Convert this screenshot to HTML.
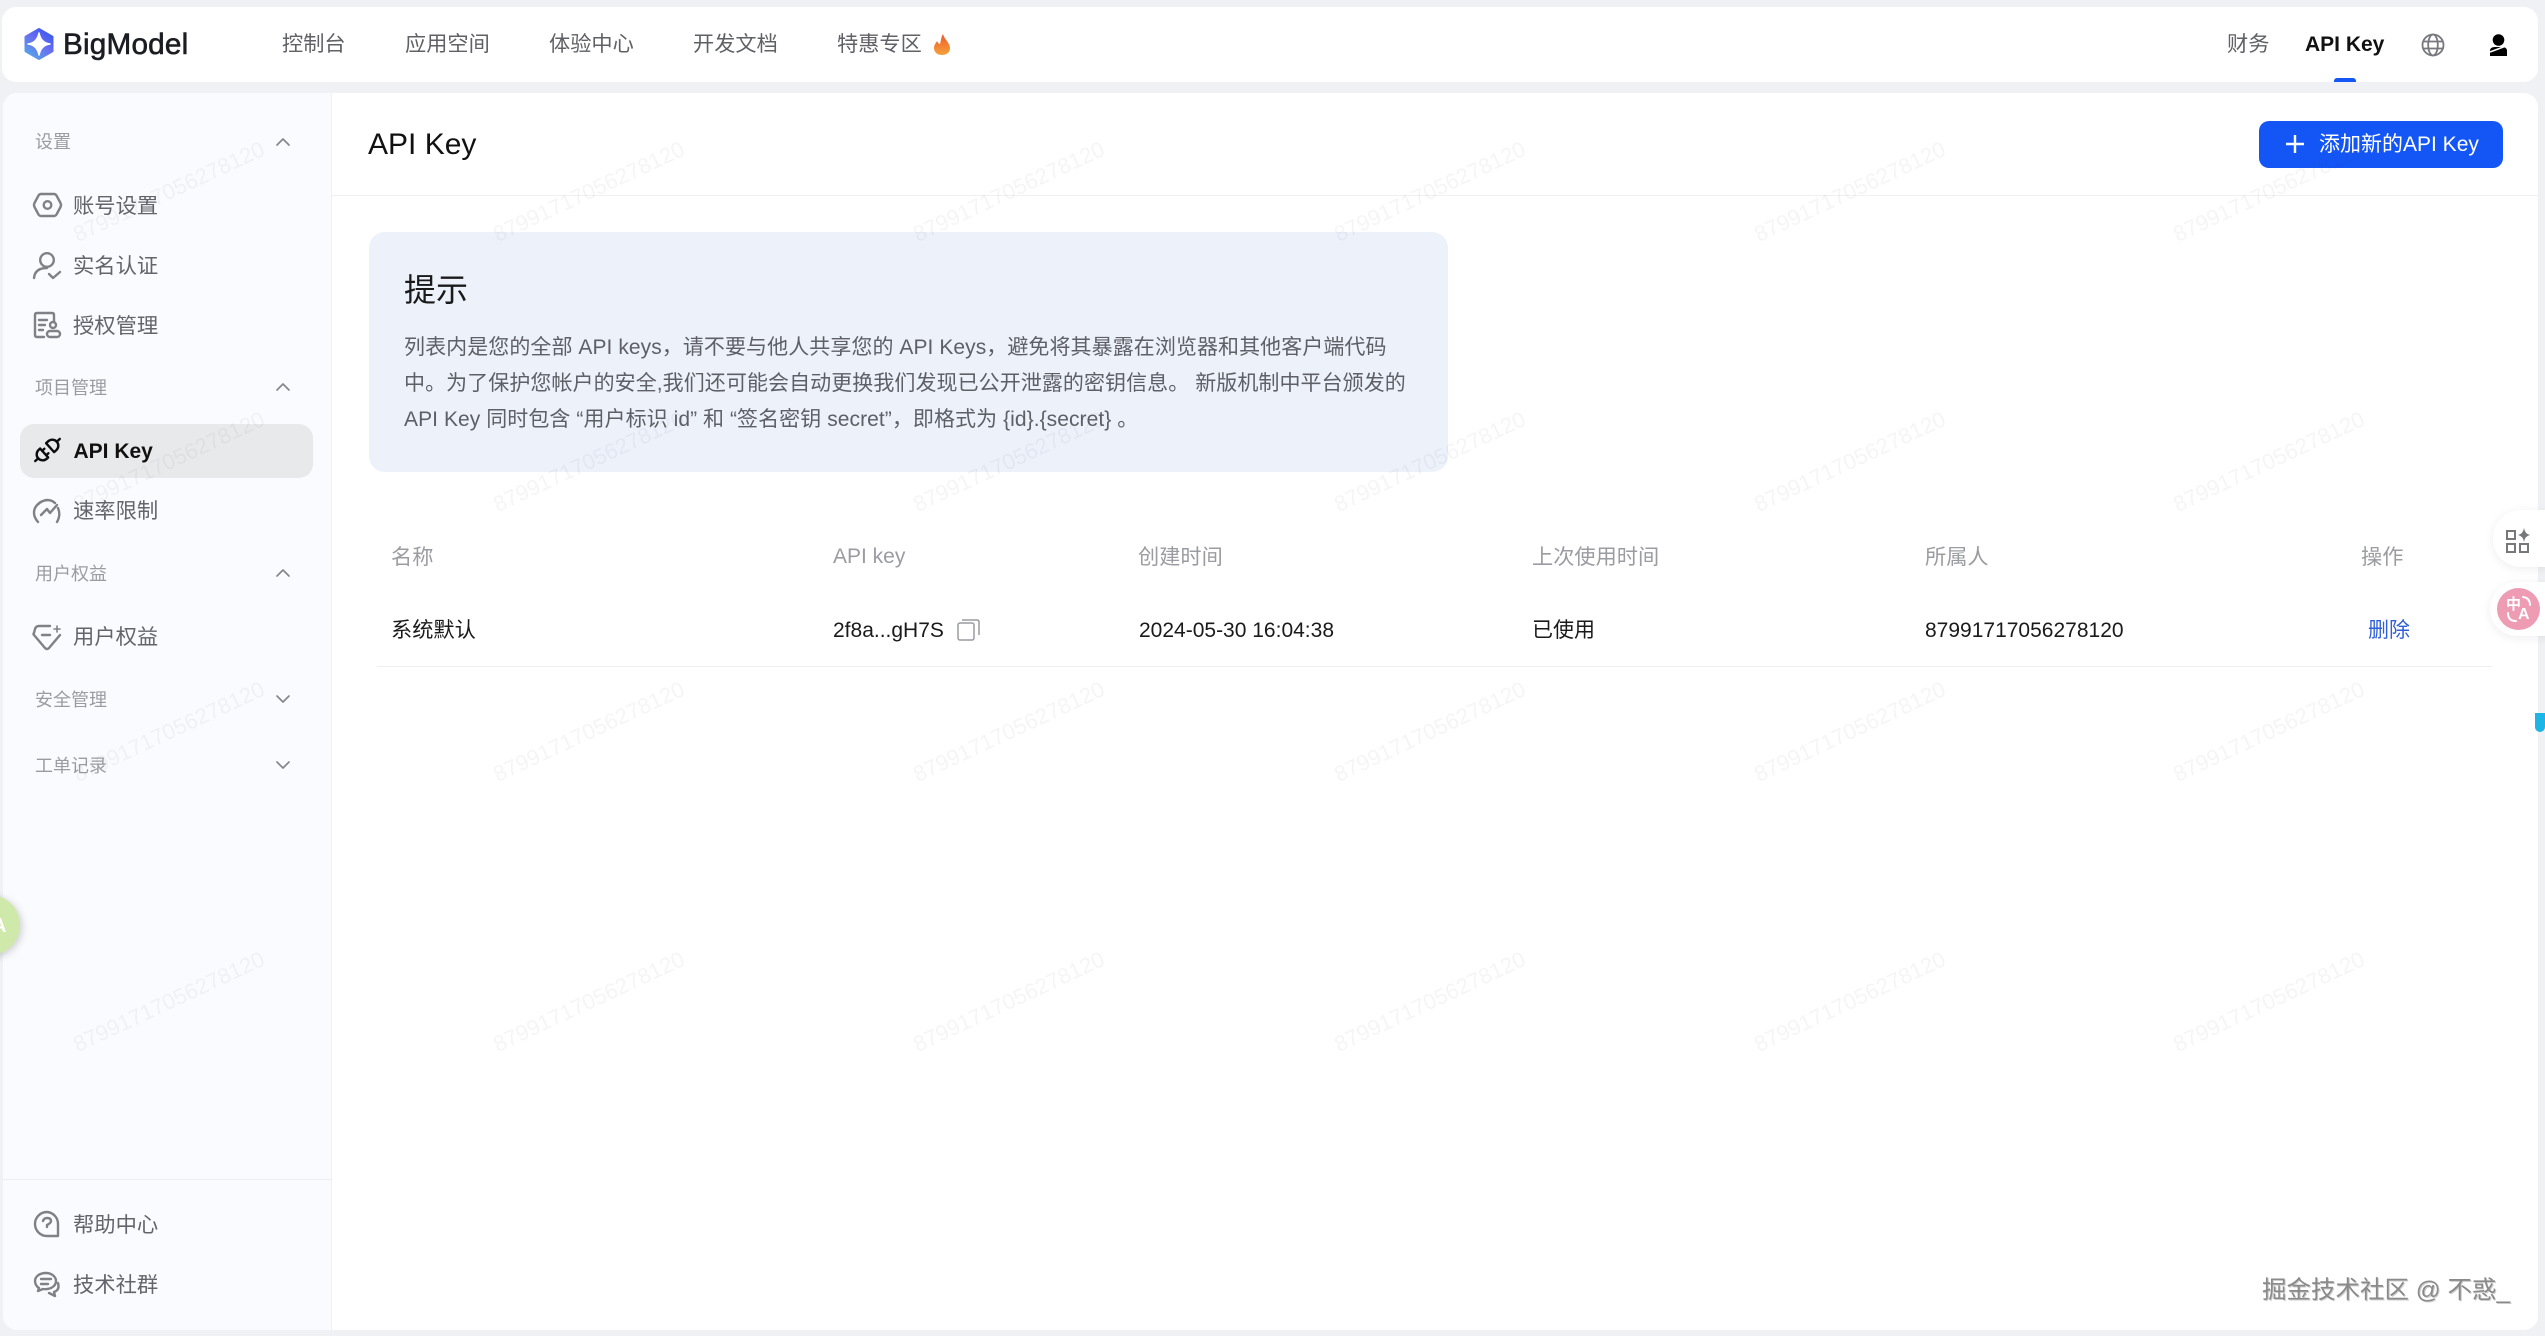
<!DOCTYPE html>
<html lang="zh-CN">
<head>
<meta charset="utf-8">
<title>API Key - BigModel</title>
<style>
html,body{margin:0;padding:0;width:2545px;height:1336px;overflow:hidden;background:#eff1f4;}
body{position:relative;font-family:"Liberation Sans","Noto Sans CJK SC",sans-serif;font-size:21px;color:#666;}
.box{position:absolute;box-sizing:border-box;}
.t{position:absolute;white-space:nowrap;line-height:36px;height:36px;}
.nav{color:#5f6166;font-size:21.2px;}
.sec{font-size:18px;color:#9b9ca1;}
.item{color:#63656b;font-size:21.3px;}
.th{color:#9b9ca1;font-size:21.2px;}
.td{color:#1a1a1a;}
.p{color:#5d6066;letter-spacing:.065px;}
.wm{position:absolute;width:260px;height:30px;line-height:30px;text-align:center;font-size:22px;color:rgba(60,60,70,.05);transform:rotate(-25deg);white-space:nowrap;}
</style>
</head>
<body>
<!-- header -->
<div class="box" style="left:2px;top:7px;width:2536px;height:75px;background:#fff;border-radius:14px;"></div>
<div class="t" style="left:63px;top:27px;font-size:29.7px;font-weight:500;color:#1b1d22;letter-spacing:.2px;-webkit-text-stroke:.6px #1b1d22;">BigModel</div>
<div class="t nav" style="left:282px;top:27px;">控制台</div>
<div class="t nav" style="left:405px;top:27px;">应用空间</div>
<div class="t nav" style="left:549px;top:27px;">体验中心</div>
<div class="t nav" style="left:693px;top:27px;">开发文档</div>
<div class="t nav" style="left:837px;top:27px;">特惠专区</div>
<div class="t nav" style="left:2227px;top:27px;">财务</div>
<div class="t" style="left:2305px;top:27px;font-weight:bold;color:#111;">API Key</div>
<div class="box" style="left:2334px;top:78px;width:22px;height:4px;background:#1456f5;border-radius:3px 3px 0 0;"></div>

<!-- main panel -->
<div class="box" style="left:3px;top:93px;width:2535px;height:1237px;background:#fff;border-radius:14px;overflow:hidden;">
  <div class="box" style="left:0;top:0;width:329px;height:1237px;background:#fafbfe;border-right:1px solid #eef0f3;"></div>
  <div class="box" style="left:0;top:1086px;width:329px;height:1px;background:#eceef1;"></div>
  <div class="box" style="left:329px;top:102px;width:2206px;height:1px;background:#eff0f2;"></div>
</div>

<!-- sidebar -->
<div class="box" style="left:20px;top:424px;width:293px;height:54px;background:#e8e9eb;border-radius:14px;"></div>
<div class="t sec" style="left:35px;top:124px;">设置</div>
<div class="t item" style="left:73px;top:187.500px;">账号设置</div>
<div class="t item" style="left:73px;top:247.500px;">实名认证</div>
<div class="t item" style="left:73px;top:307.500px;">授权管理</div>
<div class="t sec" style="left:35px;top:370px;">项目管理</div>
<div class="t" style="left:73.500px;top:434px;font-weight:bold;color:#111;">API Key</div>
<div class="t item" style="left:73px;top:493px;">速率限制</div>
<div class="t sec" style="left:35px;top:556px;">用户权益</div>
<div class="t item" style="left:73px;top:619px;">用户权益</div>
<div class="t sec" style="left:35px;top:682px;">安全管理</div>
<div class="t sec" style="left:35px;top:748px;">工单记录</div>
<div class="t item" style="left:73px;top:1207px;">帮助中心</div>
<div class="t item" style="left:73px;top:1267px;">技术社群</div>

<!-- title + button -->
<div class="t" style="left:368px;top:127px;font-size:30px;color:#111;">API Key</div>
<div class="box" style="left:2259px;top:121px;width:244px;height:47px;background:#1456f5;border-radius:10px;"></div>
<div class="t" style="left:2319px;top:127px;color:#fff;">添加新的API Key</div>

<!-- hint -->
<div class="box" style="left:369px;top:232px;width:1079px;height:240px;background:#edf1fa;border-radius:16px;"></div>
<div class="t" style="left:404px;top:272px;font-size:32px;color:#1a1a1a;">提示</div>
<div class="t p" style="left:404px;top:330px;">列表内是您的全部 API keys，请不要与他人共享您的 API Keys，避免将其暴露在浏览器和其他客户端代码</div>
<div class="t p" style="left:404px;top:366px;">中。为了保护您帐户的安全,我们还可能会自动更换我们发现已公开泄露的密钥信息。 新版机制中平台颁发的</div>
<div class="t p" style="left:404px;top:402px;">API Key 同时包含 “用户标识 id” 和 “签名密钥 secret”，即格式为 {id}.{secret} 。</div>

<!-- table -->
<div class="t th" style="left:391px;top:540px;">名称</div>
<div class="t th" style="left:833px;top:539px;font-size:21px;">API key</div>
<div class="t th" style="left:1138px;top:540px;">创建时间</div>
<div class="t th" style="left:1532px;top:540px;">上次使用时间</div>
<div class="t th" style="left:1925px;top:540px;">所属人</div>
<div class="t th" style="left:2361px;top:540px;">操作</div>
<div class="t td" style="left:391px;top:613px;font-size:21.200px;">系统默认</div>
<div class="t td" style="left:833px;top:612.500px;">2f8a...gH7S</div>
<div class="t td" style="left:1139px;top:612.500px;">2024-05-30 16:04:38</div>
<div class="t td" style="left:1532px;top:613px;">已使用</div>
<div class="t td" style="left:1925px;top:612.500px;">87991717056278120</div>
<div class="t" style="left:2368px;top:612.500px;color:#2f5fd8;">删除</div>
<div class="box" style="left:377px;top:666px;width:2115px;height:1px;background:#eceef1;"></div>

<!-- watermarks -->
<div class="wm" style="left:39px;top:177px;">87991717056278120</div>
<div class="wm" style="left:459px;top:177px;">87991717056278120</div>
<div class="wm" style="left:879px;top:177px;">87991717056278120</div>
<div class="wm" style="left:1300px;top:177px;">87991717056278120</div>
<div class="wm" style="left:1720px;top:177px;">87991717056278120</div>
<div class="wm" style="left:2139px;top:177px;">87991717056278120</div>
<div class="wm" style="left:39px;top:447px;">87991717056278120</div>
<div class="wm" style="left:459px;top:447px;">87991717056278120</div>
<div class="wm" style="left:879px;top:447px;">87991717056278120</div>
<div class="wm" style="left:1300px;top:447px;">87991717056278120</div>
<div class="wm" style="left:1720px;top:447px;">87991717056278120</div>
<div class="wm" style="left:2139px;top:447px;">87991717056278120</div>
<div class="wm" style="left:39px;top:717px;">87991717056278120</div>
<div class="wm" style="left:459px;top:717px;">87991717056278120</div>
<div class="wm" style="left:879px;top:717px;">87991717056278120</div>
<div class="wm" style="left:1300px;top:717px;">87991717056278120</div>
<div class="wm" style="left:1720px;top:717px;">87991717056278120</div>
<div class="wm" style="left:2139px;top:717px;">87991717056278120</div>
<div class="wm" style="left:39px;top:987px;">87991717056278120</div>
<div class="wm" style="left:459px;top:987px;">87991717056278120</div>
<div class="wm" style="left:879px;top:987px;">87991717056278120</div>
<div class="wm" style="left:1300px;top:987px;">87991717056278120</div>
<div class="wm" style="left:1720px;top:987px;">87991717056278120</div>
<div class="wm" style="left:2139px;top:987px;">87991717056278120</div>

<!-- floating widgets -->
<div class="box" style="left:-40px;top:895px;width:60px;height:60px;border-radius:50%;background:#cfe9ab;box-shadow:2px 2px 8px rgba(0,0,0,.18);"></div>
<div class="t" style="left:-8px;top:914px;font-size:20px;font-weight:bold;color:#fff;line-height:24px;height:24px;">A</div>
<div class="box" style="left:2493px;top:510px;width:80px;height:57px;border-radius:28px;background:#fff;box-shadow:0 2px 10px rgba(0,0,0,.07);"></div>
<div class="box" style="left:2490px;top:582px;width:80px;height:54px;border-radius:27px;background:#fff;box-shadow:0 2px 10px rgba(0,0,0,.07);"></div>
<div class="box" style="left:2497px;top:588px;width:43px;height:42px;border-radius:50%;background:#ee9cb4;"></div>
<div class="t" style="left:2506px;top:595px;font-size:15px;font-weight:bold;color:#fff;line-height:20px;height:20px;">中</div>
<div class="t" style="left:2518px;top:605px;font-size:16px;font-weight:bold;color:#fff;line-height:20px;height:20px;">A</div>
<div class="box" style="left:2535px;top:713px;width:10px;height:19px;background:#1db4e6;border-radius:0 0 5px 5px;"></div>

<!-- juejin mark -->
<div class="t" style="left:2262px;top:1272.500px;font-size:24.5px;color:#8a8a8a;text-shadow:1px 1px 0 #ccc,-1px -1px 0 #fff;">掘金技术社区 @ 不惑_</div>

<!-- icons -->
<svg width="2545" height="1336" viewBox="0 0 2545 1336" style="position:absolute;left:0;top:0;" fill="none">
  <defs>
    <linearGradient id="lg" x1="50" y1="28" x2="26" y2="60" gradientUnits="userSpaceOnUse">
      <stop offset="0" stop-color="#2f55ee"/><stop offset=".45" stop-color="#6a6df0"/><stop offset="1" stop-color="#4fb2e8"/>
    </linearGradient>
    <linearGradient id="fl" x1="0" y1="0" x2="0" y2="1">
      <stop offset="0" stop-color="#f0562a"/><stop offset="1" stop-color="#f5a33a"/>
    </linearGradient>
  </defs>
  <!-- logo -->
  <path d="M39 29.500 L52 37 V51 L39 58.500 L26 51 V37 Z" fill="url(#lg)" stroke="url(#lg)" stroke-width="3" stroke-linejoin="round"/>
  <path d="M39 33 Q41 43 50 44 Q41 45 39 55 Q37 45 28 44 Q37 43 39 33 Z" fill="#fff" stroke="#fff" stroke-width="1.500" stroke-linejoin="round"/>
  <!-- flame -->
  <path d="M943 34 C944 39 950 43 950 48 C950 52 947 55 942 55 C937 55 934 52 934 48 C934 45 936 43 937 41 C938 43 939 44 940 44 C941 41 941 37 943 34 Z" fill="url(#fl)"/>
  <!-- globe -->
  <g stroke="#77787e" stroke-width="1.800">
    <circle cx="2433" cy="45" r="10.500"/>
    <ellipse cx="2433" cy="45" rx="4.800" ry="10.500"/>
    <path d="M2423 41.500H2443M2423 48.500H2443"/>
  </g>
  <!-- user -->
  <circle cx="2498.500" cy="40" r="5.800" fill="#000"/>
  <path d="M2490 56 V51 Q2490 47 2495 47 H2502 Q2507 47 2507 51 V56 Z" fill="#000"/>
  <path d="M2490 52 L2506 46" stroke="#fff" stroke-width="1.500"/>
  <!-- plus -->
  <path d="M2295 135V153M2286 144H2304" stroke="#fff" stroke-width="2.400"/>
  <!-- chevrons -->
  <g stroke="#85868b" stroke-width="1.700" stroke-linecap="round" stroke-linejoin="round">
    <path d="M277 145L283 139L289 145"/>
    <path d="M277 390L283 384L289 390"/>
    <path d="M277 576L283 570L289 576"/>
    <path d="M277 696L283 702L289 696"/>
    <path d="M277 762L283 768L289 762"/>
  </g>
  <!-- sidebar icons -->
  <g stroke="#808186" stroke-width="2.400" stroke-linecap="round" stroke-linejoin="round">
    <path d="M41 194H54Q55.500 194 56.500 195.500L60.500 203Q61.500 205 60.500 207L56.500 214.500Q55.500 216 54 216H41Q39.500 216 38.500 214.500L34.500 207Q33.500 205 34.500 203L38.500 195.500Q39.500 194 41 194Z"/>
    <circle cx="47.500" cy="205" r="3.800"/>
    <circle cx="47" cy="260" r="6.800"/>
    <path d="M34 278Q35 268 47 268"/>
    <path d="M49 274L53 278L60 272"/>
    <path d="M54 322V315Q54 313 52 313H37Q35 313 35 315V335Q35 337 37 337H44"/>
    <path d="M39 320H47M39 325H45M39 330H43"/>
    <circle cx="53" cy="325" r="3"/>
    <rect x="47" y="331" width="13" height="6" rx="3"/>
    <path d="M38 522Q32 515 35 508Q39 501 47 500Q52 500 55 503M58 508Q61 515 57 522"/>
    <path d="M41 515L47 509L50 513L57 505"/>
    <path d="M50 626H39Q36 626 35 629L34 633Q33 634 34 635L45 648Q47 650 49 648L60 635"/>
    <path d="M42 635H50"/>
    <path d="M57 626V632M54 629H60" stroke-width="1.600"/>
    <path d="M47 1212A12 12 0 1 0 47 1236H58V1224A12 12 0 0 0 47 1212Z"/>
    <path d="M43 1221Q44 1218 47 1218Q51 1218 51 1221Q51 1223 47 1225V1227"/>
    <path d="M46 1273C39 1273 35 1277 35 1281C35 1284 37 1287 39 1288L38 1291L43 1289C49 1290 56 1287 56 1281C56 1277 52 1273 46 1273Z"/>
    <path d="M41 1279H51M41 1284H48"/>
    <path d="M58 1283Q60 1290 54 1292L55 1296L49 1293"/>
  </g>
  <!-- api key plug (active) -->
  <g transform="rotate(-42 47.500 450)" stroke="#0d0d0d" stroke-width="2.400" stroke-linecap="round" stroke-linejoin="round">
    <path d="M31 450H35"/>
    <path d="M43 444H41A6 6 0 0 0 41 456H43Z"/>
    <path d="M43 447H46M43 453H46"/>
    <path d="M51 444H54A6 6 0 0 1 54 456H51Z"/>
    <path d="M60 450H64"/>
  </g>
  <!-- translate arcs -->
  <path d="M2523 597Q2530 598 2530 605M2508 613Q2508 621 2516 621" stroke="#fff" stroke-width="2" stroke-linecap="round"/>
  <!-- copy icon -->
  <g stroke="#9a9ba0" stroke-width="1.500" stroke-linejoin="round">
    <rect x="958" y="623" width="16" height="17" rx="2"/>
    <path d="M962 620H977Q979 620 979 622V635"/>
  </g>
  <!-- apps icon -->
  <g stroke="#77787c" stroke-width="2">
    <rect x="2507" y="531" width="8" height="8"/>
    <rect x="2507" y="544" width="8" height="8"/>
    <rect x="2520" y="544" width="8" height="8"/>
  </g>
  <path d="M2524 528Q2525 534 2530 535Q2525 536 2524 542Q2523 536 2518 535Q2523 534 2524 528Z" fill="#77787c"/>
</svg>
</body>
</html>
